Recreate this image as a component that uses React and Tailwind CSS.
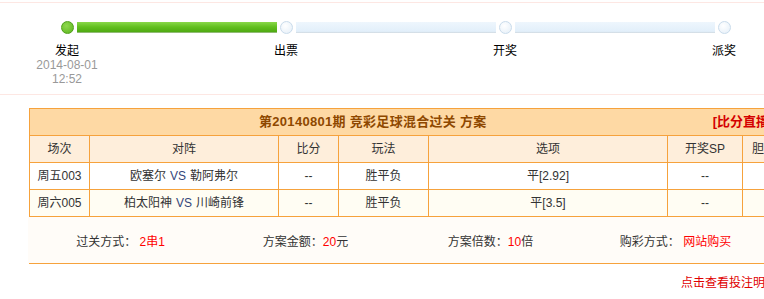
import React from "react";

const font = "font-['Liberation_Sans','Noto_Sans_CJK_SC',sans-serif]";

const steps = [
  { label: "发起", done: true, time: ["2014-08-01", "12:52"] },
  { label: "出票" },
  { label: "开奖" },
  { label: "派奖" },
];

const cols = [
  { title: "场次", w: "w-[60px]" },
  { title: "对阵", w: "w-[189px]" },
  { title: "比分", w: "w-[60px]" },
  { title: "玩法", w: "w-[90px]" },
  { title: "选项", w: "w-[239px]" },
  { title: "开奖SP", w: "w-[75px]" },
  { title: "胆", w: "w-[31px]" },
  { title: "", w: "w-[60px]" },
];

const rows = [
  { no: "周五003", home: "欧塞尔", away: "勒阿弗尔", pick: "平[2.92]", bg: "bg-white" },
  { no: "周六005", home: "柏太阳神", away: "川崎前锋", pick: "平[3.5]", bg: "bg-[#fffdf3]" },
];

const Dot = ({ done }) =>
  done ? (
    <span className="w-[13px] h-[13px] rounded-full border border-[#4f9f1a] bg-[radial-gradient(circle_at_40%_35%,#8fd84e,#5bb51c)] shrink-0" />
  ) : (
    <span className="w-[13px] h-[13px] rounded-full border border-[#c9dbeb] bg-[radial-gradient(circle_at_40%_35%,#ffffff,#e3eef8)] shrink-0" />
  );

const Bar = ({ done }) =>
  done ? (
    <span className="w-[200px] h-[11px] shrink-0 bg-[linear-gradient(#8ad84a,#62bf1f_45%,#4faa12_90%,#c9c9c9)]" />
  ) : (
    <span className="w-[200px] h-[11px] shrink-0 bg-[linear-gradient(#eef6fd,#e2effa_85%,#cfd8df)]" />
  );

const Cell = ({ w, children, last }) => (
  <div className={`${w} shrink-0 flex items-center justify-center ${last ? "" : "border-r border-[#f6a23c]"}`}>
    {children}
  </div>
);

export default function App() {
  return (
    <div className={`${font} w-[764px] h-[299px] overflow-hidden bg-white text-[12px] text-[#333] leading-[14px]`}>
      {/* progress */}
      <div className="mt-[2px] h-[93px] border-y border-[#fde7e3]">
        <div className="flex items-center pl-[61px] pt-[18px] gap-[3px]">
          {steps.map((s, i) => (
            <React.Fragment key={s.label}>
              <Dot done={s.done} />
              {i < steps.length - 1 && <Bar done={s.done} />}
            </React.Fragment>
          ))}
        </div>
        <div className="flex pl-[17px] gap-[119px] mt-[10px]">
          {steps.map((s) => (
            <div key={s.label} className="w-[100px] shrink-0 text-center">
              <div className="text-black">{s.label}</div>
              {s.time && s.time.map((t) => <div key={t} className="text-[#999]">{t}</div>)}
            </div>
          ))}
        </div>
      </div>

      {/* plan table */}
      <div className="ml-[29px] mt-[13px] w-[810px] border border-[#f6a23c]">
        <div className="h-[27px] border-b border-[#f6a23c] bg-[#fed9a4] flex items-center font-bold text-[13px] whitespace-nowrap">
          <span className="pl-[229px] tracking-[0.3px] text-[#8e4800]">第20140801期 竞彩足球混合过关 方案</span>
          <span className="ml-[226px] text-[#d40000]">[比分直播]</span>
        </div>
        <div className="h-[27px] border-b border-[#f6a23c] bg-[#feeedb] flex">
          {cols.map((c, i) => (
            <Cell key={i} w={c.w} last={i === cols.length - 1}>{c.title}</Cell>
          ))}
        </div>
        {rows.map((r) => (
          <div key={r.no} className={`h-[27px] border-b border-[#f6a23c] ${r.bg} flex`}>
            <Cell w={cols[0].w}>{r.no}</Cell>
            <Cell w={cols[1].w}>
              <span>{r.home}</span>
              <span className="mx-[4px] text-[#34467a]">VS</span>
              <span>{r.away}</span>
            </Cell>
            <Cell w={cols[2].w}>--</Cell>
            <Cell w={cols[3].w}>胜平负</Cell>
            <Cell w={cols[4].w}>{r.pick}</Cell>
            <Cell w={cols[5].w}>--</Cell>
            <Cell w={cols[6].w} />
            <Cell w={cols[7].w} last />
          </div>
        ))}
        <div className="h-[46px] bg-[#fffcf8] flex items-center pt-[4px] -ml-[2px]">
          <div className="w-[185px] text-center">
            过关方式： <span className="text-[#f00]">2串1</span>
          </div>
          <div className="w-[185px] text-center">
            方案金额：<span className="text-[#f00]">20</span>元
          </div>
          <div className="w-[185px] text-center">
            方案倍数：<span className="text-[#f00]">10</span>倍
          </div>
          <div className="w-[185px] text-center">
            购彩方式： <span className="text-[#f00]">网站购买</span>
          </div>
        </div>
      </div>

      <div className="ml-[681px] mt-[12px] whitespace-nowrap text-[#e00000]">点击查看投注明细</div>
    </div>
  );
}
